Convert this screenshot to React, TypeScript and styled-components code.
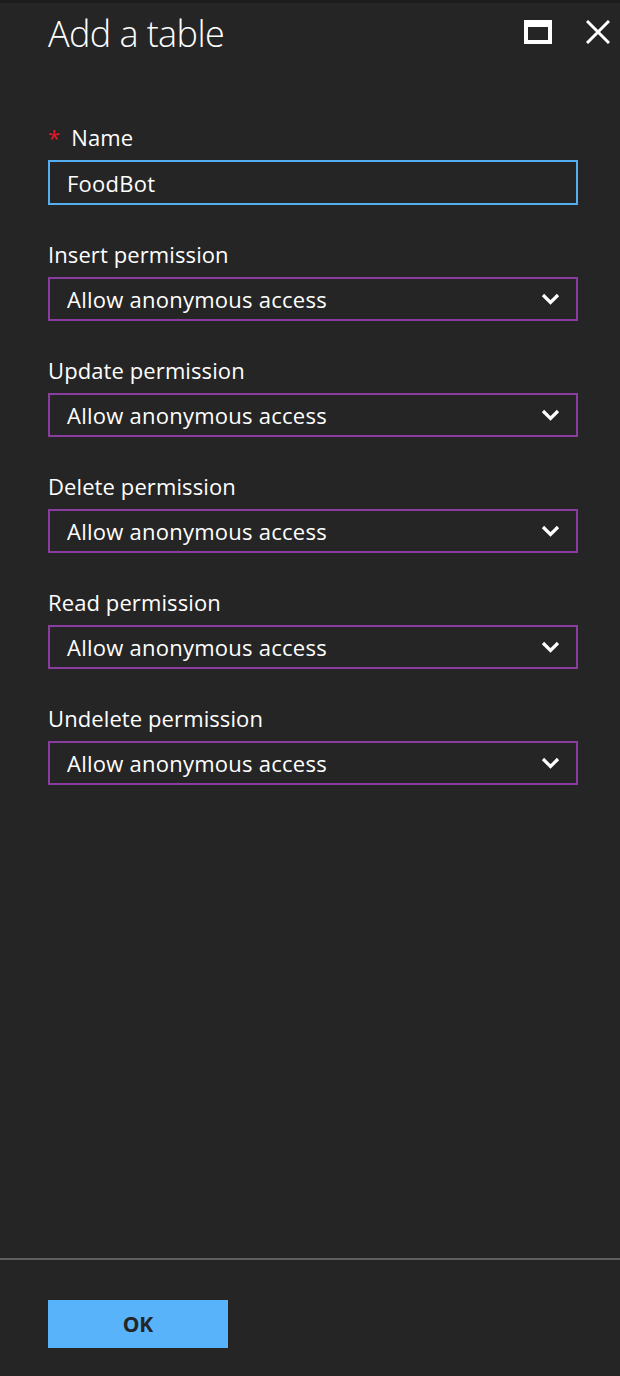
import React from "react";
import styled, { createGlobalStyle } from "styled-components";

const GlobalStyle = createGlobalStyle`
  html, body {
    margin: 0;
    padding: 0;
    background: #252525;
  }
  * {
    box-sizing: border-box;
  }
`;

const Blade = styled.div`
  height: 1376px;
  display: flex;
  flex-direction: column;
  background: #252525;
  border-top: 3px solid #1c1c1c;
  font-family: "Open Sans", "Liberation Sans", sans-serif;
  color: #fff;
`;

const Header = styled.div`
  display: flex;
  align-items: flex-start;
  justify-content: space-between;
  padding: 5px 10px 0 48px;
`;

const Title = styled.h1`
  margin: 2px 0 0;
  font-size: 36px;
  line-height: 48px;
  font-weight: 300;
  letter-spacing: -0.6px;
`;

const HeaderIcons = styled.div`
  display: flex;
  align-items: center;
  gap: 34px;
  padding-top: 12px;
`;

const IconButton = styled.button`
  background: transparent;
  border: none;
  padding: 0;
  cursor: pointer;
  display: flex;
`;

const Content = styled.div`
  flex: 1;
  padding: 64px 42px 0 48px;
  display: flex;
  flex-direction: column;
`;

const Field = styled.div`
  display: flex;
  flex-direction: column;
  gap: 8px;
  margin-bottom: 34px;
`;

const Label = styled.label`
  font-size: 22px;
  line-height: 30px;
  display: flex;
  align-items: center;
  letter-spacing: 0.1px;
`;

const Required = styled.span`
  color: #e5182b;
  margin-right: 11px;
  font-size: 22px;
  line-height: 30px;
`;

const TextInput = styled.input`
  height: 45px;
  width: 100%;
  background: transparent;
  border: 2px solid #55aeef;
  outline: none;
  color: #fff;
  font-family: inherit;
  font-size: 22px;
  letter-spacing: 0.25px;
  padding: 0 17px;
`;

const Select = styled.div`
  height: 44px;
  width: 100%;
  border: 2px solid #8b3d9f;
  display: flex;
  align-items: center;
  justify-content: space-between;
  padding: 0 16px 0 17px;
  font-size: 22px;
  letter-spacing: 0.25px;
  cursor: pointer;
`;

const Footer = styled.div`
  border-top: 2px solid #5e5e5e;
  padding: 40px 48px 28px;
`;

const OkButton = styled.button`
  width: 180px;
  height: 48px;
  border: none;
  background: #58b3fa;
  color: #252525;
  font-family: inherit;
  font-weight: 700;
  font-size: 21px;
  cursor: pointer;
`;

const MaximizeIcon = () => (
  <svg width="28" height="24" viewBox="0 0 28 24">
    <path d="M0 0H28V24H0Z M4 7V20H24V7Z" fill="#fff" fillRule="evenodd" />
  </svg>
);

const CloseIcon = () => (
  <svg width="24" height="24" viewBox="0 0 24 24">
    <path d="M1 1L23 23M23 1L1 23" stroke="#fff" strokeWidth="3" />
  </svg>
);

const Chevron = () => (
  <svg width="19" height="12" viewBox="0 0 19 12">
    <path d="M2 2L9.5 9.5L17 2" stroke="#fff" strokeWidth="3.2" fill="none" />
  </svg>
);

const permissions = ["Insert", "Update", "Delete", "Read", "Undelete"];

export default function App() {
  return (
    <>
      <GlobalStyle />
      <Blade>
        <Header>
          <Title>Add a table</Title>
          <HeaderIcons>
            <IconButton aria-label="Maximize">
              <MaximizeIcon />
            </IconButton>
            <IconButton aria-label="Close">
              <CloseIcon />
            </IconButton>
          </HeaderIcons>
        </Header>
        <Content>
          <Field>
            <Label>
              <Required>*</Required>Name
            </Label>
            <TextInput defaultValue="FoodBot" />
          </Field>
          {permissions.map((p) => (
            <Field key={p}>
              <Label>{p} permission</Label>
              <Select>
                <span>Allow anonymous access</span>
                <Chevron />
              </Select>
            </Field>
          ))}
        </Content>
        <Footer>
          <OkButton>OK</OkButton>
        </Footer>
      </Blade>
    </>
  );
}
